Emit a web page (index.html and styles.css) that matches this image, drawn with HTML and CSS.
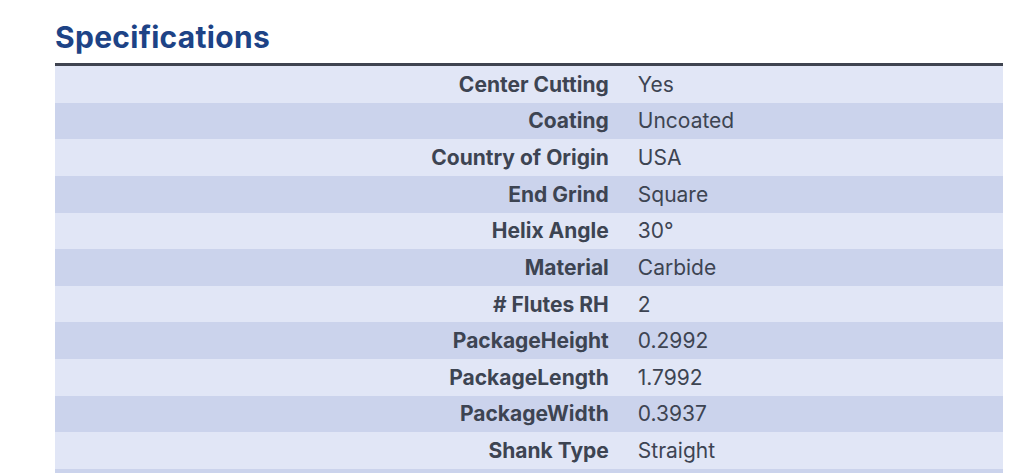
FILE: index.html
```html
<!DOCTYPE html>
<html>
<head>
<meta charset="utf-8">
<link rel="stylesheet" href="styles.css">
</head>
<body>
<section class="specs">
  <h2 class="specs-title">Specifications</h2>
  <dl class="specs-list">
    <div class="spec-row"><dt class="spec-label">Center Cutting</dt><dd class="spec-value">Yes</dd></div>
    <div class="spec-row"><dt class="spec-label">Coating</dt><dd class="spec-value">Uncoated</dd></div>
    <div class="spec-row"><dt class="spec-label">Country of Origin</dt><dd class="spec-value">USA</dd></div>
    <div class="spec-row"><dt class="spec-label">End Grind</dt><dd class="spec-value">Square</dd></div>
    <div class="spec-row"><dt class="spec-label">Helix Angle</dt><dd class="spec-value">30°</dd></div>
    <div class="spec-row"><dt class="spec-label">Material</dt><dd class="spec-value">Carbide</dd></div>
    <div class="spec-row"><dt class="spec-label"># Flutes RH</dt><dd class="spec-value">2</dd></div>
    <div class="spec-row"><dt class="spec-label">PackageHeight</dt><dd class="spec-value">0.2992</dd></div>
    <div class="spec-row"><dt class="spec-label">PackageLength</dt><dd class="spec-value">1.7992</dd></div>
    <div class="spec-row"><dt class="spec-label">PackageWidth</dt><dd class="spec-value">0.3937</dd></div>
    <div class="spec-row"><dt class="spec-label">Shank Type</dt><dd class="spec-value">Straight</dd></div>
    <div class="spec-row"><dt class="spec-label"></dt><dd class="spec-value"></dd></div>
  </dl>
</section>
</body>
</html>
```

FILE: styles.css
```css
html, body {
  margin: 0;
  padding: 0;
  background: #ffffff;
}
body {
  font-family: "Inter", "Open Sans", sans-serif;
  color: #3d4452;
}
.specs {
  width: 948px;
  padding: 18px 0 0 55px;
}
.specs-title {
  margin: 0 0 7px 0;
  font-size: 30px;
  line-height: 38px;
  font-weight: 700;
  letter-spacing: 0.3px;
  color: #1d4386;
}
.specs-list {
  margin: 0;
  border-top: 3px solid #3f4450;
  display: flex;
  flex-direction: column;
}
.spec-row {
  display: flex;
  align-items: center;
  height: 36.64px;
  flex: 0 0 auto;
  background: #e1e6f6;
}
.spec-row:nth-child(even) {
  background: #cbd3ec;
}
.spec-label,
.spec-value {
  margin: 0;
  font-size: 21px;
  line-height: 26px;
  padding-top: 1px;
}
.spec-label {
  flex: 0 0 60%;
  box-sizing: border-box;
  padding-right: 15px;
  text-align: right;
  font-weight: 700;
}
.spec-value {
  flex: 1 1 auto;
  padding-left: 14px;
  font-weight: 400;
}
```
